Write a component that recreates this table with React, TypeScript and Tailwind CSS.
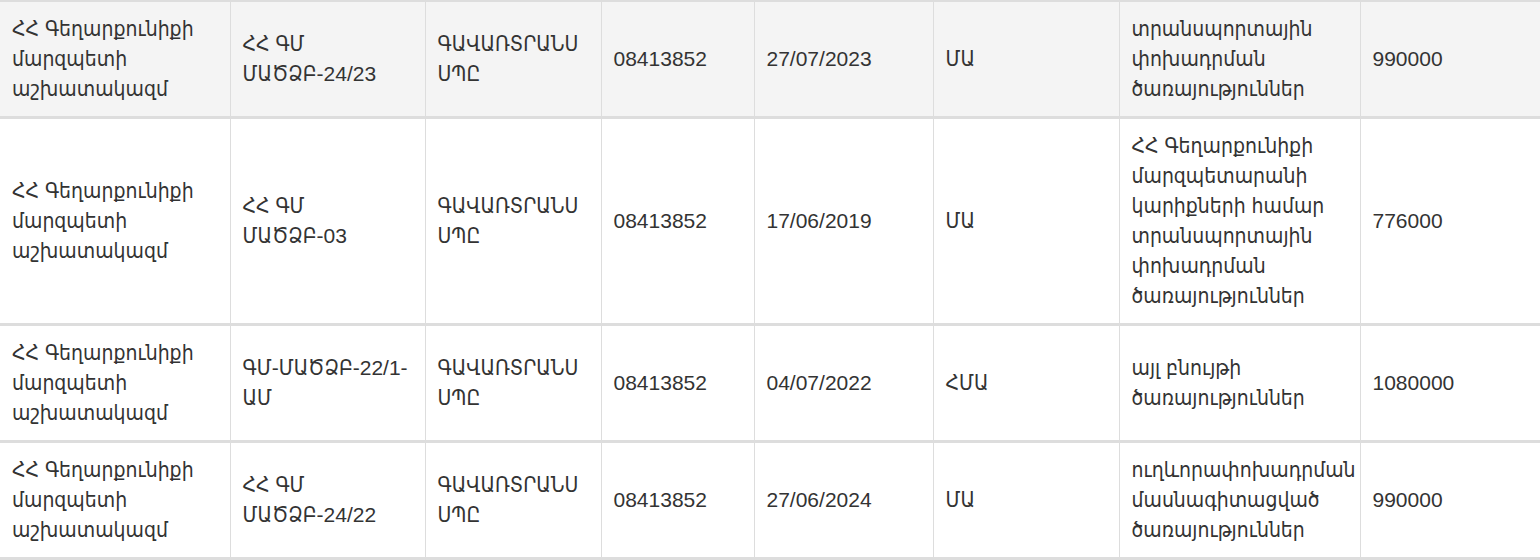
import React from "react";

type Row = {
    org: string[];
    code: string[];
    company: string[];
    tin: string;
    date: string;
    kind: string;
    subject: string[];
    amount: string;
};

const rows: Row[] = [
    {
        org: ["ՀՀ Գեղարքունիքի", "մարզպետի", "աշխատակազմ"],
        code: ["ՀՀ ԳՄ", "ՄԱԾՁԲ-24/23"],
        company: ["ԳԱՎԱՌՏՐԱՆՍ", "ՍՊԸ"],
        tin: "08413852",
        date: "27/07/2023",
        kind: "ՄԱ",
        subject: ["տրանսպորտային", "փոխադրման", "ծառայություններ"],
        amount: "990000",
    },
    {
        org: ["ՀՀ Գեղարքունիքի", "մարզպետի", "աշխատակազմ"],
        code: ["ՀՀ ԳՄ", "ՄԱԾՁԲ-03"],
        company: ["ԳԱՎԱՌՏՐԱՆՍ", "ՍՊԸ"],
        tin: "08413852",
        date: "17/06/2019",
        kind: "ՄԱ",
        subject: [
            "ՀՀ Գեղարքունիքի",
            "մարզպետարանի",
            "կարիքների համար",
            "տրանսպորտային",
            "փոխադրման",
            "ծառայություններ",
        ],
        amount: "776000",
    },
    {
        org: ["ՀՀ Գեղարքունիքի", "մարզպետի", "աշխատակազմ"],
        code: ["ԳՄ-ՄԱԾՁԲ-22/1-", "ԱՄ"],
        company: ["ԳԱՎԱՌՏՐԱՆՍ", "ՍՊԸ"],
        tin: "08413852",
        date: "04/07/2022",
        kind: "ՀՄԱ",
        subject: ["այլ բնույթի", "ծառայություններ"],
        amount: "1080000",
    },
    {
        org: ["ՀՀ Գեղարքունիքի", "մարզպետի", "աշխատակազմ"],
        code: ["ՀՀ ԳՄ", "ՄԱԾՁԲ-24/22"],
        company: ["ԳԱՎԱՌՏՐԱՆՍ", "ՍՊԸ"],
        tin: "08413852",
        date: "27/06/2024",
        kind: "ՄԱ",
        subject: ["ուղևորափոխադրման", "մասնագիտացված", "ծառայություններ"],
        amount: "990000",
    },
];

function Lines({ lines }: { lines: string[] }) {
    return (
        <>
            {lines.map((l, i) => (
                <span key={i} className="block whitespace-nowrap">
                    {l}
                </span>
            ))}
        </>
    );
}

const td = "px-3 py-3 align-middle border-x border-[#dddddd] first:border-l-0 last:border-r-0";

export default function App() {
    return (
        <div
            className="w-[1540px] bg-white text-[#333333] text-[21px] leading-[30px]"
            style={{ fontFamily: '"Liberation Sans", "DejaVu Sans Condensed", "DejaVu Sans", Arial, sans-serif' }}
        >
            <table className="w-full table-fixed border-collapse border-t-2 border-[#dddddd]">
                <colgroup>
                    <col className="w-[230px]" />
                    <col className="w-[195px]" />
                    <col className="w-[176px]" />
                    <col className="w-[153px]" />
                    <col className="w-[179px]" />
                    <col className="w-[186px]" />
                    <col className="w-[241px]" />
                    <col className="w-[180px]" />
                </colgroup>
                <tbody>
                    {rows.map((r, i) => (
                        <tr
                            key={i}
                            className={`border-b-[3px] border-[#dddddd] ${i === 0 ? "bg-[#f4f4f4]" : "bg-white"}`}
                        >
                            <td className={td}>
                                <Lines lines={r.org} />
                            </td>
                            <td className={td}>
                                <Lines lines={r.code} />
                            </td>
                            <td className={td}>
                                <Lines lines={r.company} />
                            </td>
                            <td className={td}>{r.tin}</td>
                            <td className={td}>{r.date}</td>
                            <td className={td}>{r.kind}</td>
                            <td className={td}>
                                <Lines lines={r.subject} />
                            </td>
                            <td className={td}>{r.amount}</td>
                        </tr>
                    ))}
                </tbody>
            </table>
        </div>
    );
}
